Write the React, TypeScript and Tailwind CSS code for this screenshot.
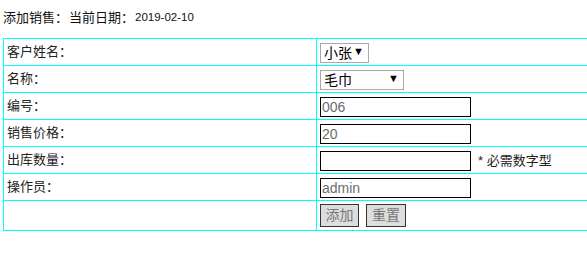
import React from 'react';

const font = { fontFamily: '"Liberation Sans", "Noto Sans CJK SC", sans-serif' };

const Select: React.FC<{ value: string; options: string[]; width: string }> = ({ value, options, width }) => (
  <div className={`relative inline-block h-[20px] ${width}`}>
    <select
      defaultValue={value}
      className="h-full w-full appearance-none rounded-none border border-[#a9a9a9] bg-white pl-[3px] text-[14px] leading-[18px] text-black outline-none"
    >
      {options.map((o) => (
        <option key={o}>{o}</option>
      ))}
    </select>
    <span className="pointer-events-none absolute right-[5px] top-[3px] text-[11px] leading-[14px] text-black">▼</span>
  </div>
);

const TextInput: React.FC<{ value?: string }> = ({ value }) => (
  <input
    defaultValue={value}
    className="h-[20px] w-[151px] border border-black bg-white pl-[1px] text-[14px] leading-[18px] text-[#6d6d6d] outline-none"
  />
);

const rows: { label: string; field: React.ReactNode }[] = [
  { label: '客户姓名：', field: <Select value="小张" options={['小张', '小李']} width="w-[49px]" /> },
  { label: '名称：', field: <Select value="毛巾" options={['毛巾', '牙刷']} width="w-[84px]" /> },
  { label: '编号：', field: <TextInput value="006" /> },
  { label: '销售价格：', field: <TextInput value="20" /> },
  {
    label: '出库数量：',
    field: (
      <div className="flex items-center">
        <TextInput />
        <span className="ml-[7px] text-[13px] text-[#222]">* 必需数字型</span>
      </div>
    ),
  },
  { label: '操作员：', field: <TextInput value="admin" /> },
];

const App: React.FC = () => {
  return (
    <div className="h-[270px] w-[587px] overflow-hidden bg-white" style={font}>
      <div className="flex h-[38px] items-center pl-[3px] pb-[2px] text-[13px] text-[#111]">
        <span>添加销售：</span>
        <span className="ml-[1px]">当前日期：</span>
        <span className="ml-[1px] text-[11.5px]">2019-02-10</span>
      </div>
      <table className="ml-[3px] w-[640px] border-collapse">
        <tbody>
          {rows.map((r) => (
            <tr key={r.label}>
              <td className="h-[27px] w-[313px] border border-[#00ffff] pl-[3px] align-middle text-[13px] text-[#222]">
                {r.label}
              </td>
              <td className="h-[27px] border border-[#00ffff] pl-[3px] pt-[1px] align-middle">{r.field}</td>
            </tr>
          ))}
          <tr>
            <td className="h-[30px] w-[313px] border border-[#00ffff]"></td>
            <td className="h-[30px] border border-[#00ffff] pl-[3px] align-middle">
              <div className="flex gap-[7px]">
                <button className="h-[23px] w-[39px] border border-[#333] bg-[#dddddd] text-[14px] text-[#777]">
                  添加
                </button>
                <button className="h-[23px] w-[40px] border border-[#333] bg-[#dddddd] text-[14px] text-[#777]">
                  重置
                </button>
              </div>
            </td>
          </tr>
        </tbody>
      </table>
    </div>
  );
};

export default App;
